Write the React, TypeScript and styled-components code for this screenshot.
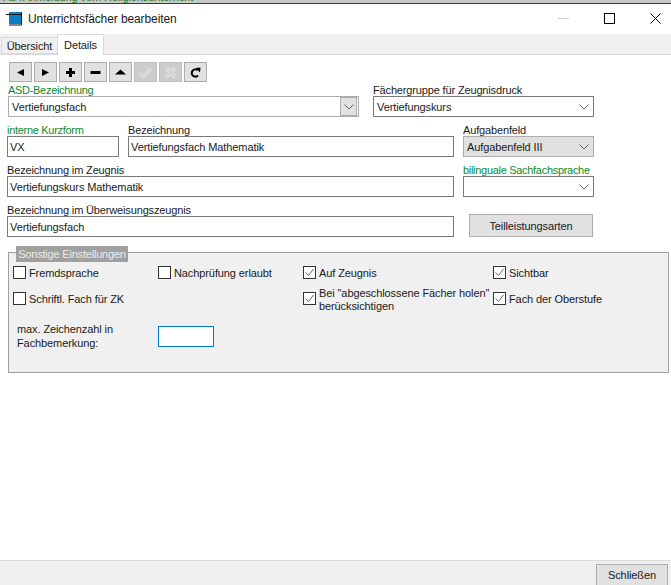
import React from "react";
import styled, {createGlobalStyle} from "styled-components";

const GlobalStyle = createGlobalStyle`
    html, body {
        margin: 0;
        padding: 0;
        background: #fff;
    }

    body {
        font-family: "Liberation Sans", Arial, sans-serif;
        font-size: 11px;
        letter-spacing: -0.1px;
        color: #1a1a1a;
    }
`;

const Page = styled.div`
    width: 671px;
    height: 585px;
    display: flex;
    flex-direction: column;
    overflow: hidden;
    background: #fff;
`;

const BehindWindow = styled.div`
    height: 3px;
    flex: 0 0 auto;
    display: flex;
    align-items: flex-end;
    padding-left: 3px;
    overflow: hidden;
    background: #c8c8c8;
    border-bottom: 1px solid #3c3c3c;
    color: #1f7a1f;
    font-size: 11px;
    line-height: 12px;
    white-space: nowrap;
`;

const TitleBar = styled.div`
    height: 30px;
    flex: 0 0 auto;
    display: flex;
    align-items: center;
    padding-left: 6px;
    margin-right: -7px;
    font-size: 12px;
`;

const TitleText = styled.span`
    margin-left: 6px;
    flex: 1;
`;

const WindowButton = styled.div`
    width: 46px;
    height: 30px;
    padding-bottom: 2px;
    box-sizing: border-box;
    display: flex;
    align-items: center;
    justify-content: center;
`;

const TabStrip = styled.div`
    height: 20px;
    flex: 0 0 auto;
    display: flex;
    align-items: flex-end;
    padding-left: 1px;
    background: #f0f0f0;
    border-bottom: 1px solid #d9d9d9;
`;

const Tab = styled.div<{ $active?: boolean }>`
    height: ${p => (p.$active ? 21 : 17)}px;
    margin-bottom: ${p => (p.$active ? -1 : 0)}px;
    width: ${p => (p.$active ? 47 : 56)}px;
    display: flex;
    align-items: center;
    justify-content: center;
    box-sizing: border-box;
    background: ${p => (p.$active ? "#fff" : "#f0f0f0")};
    border: 1px solid #d9d9d9;
    border-bottom: ${p => (p.$active ? "none" : "1px solid #d9d9d9")};
    border-right: ${p => (p.$active ? "1px solid #d9d9d9" : "none")};
`;

const Content = styled.div`
    flex: 1;
    display: flex;
    flex-direction: column;
    padding: 7px 2px 0 7px;
`;

const Toolbar = styled.div`
    display: flex;
    gap: 2px;
    padding-left: 2px;
    height: 20px;
`;

const ToolButton = styled.div<{ $disabled?: boolean }>`
    width: 23px;
    height: 20px;
    box-sizing: border-box;
    display: flex;
    align-items: center;
    justify-content: center;
    background: ${p => (p.$disabled ? "#cccccc" : "#e1e1e1")};
    border: 1px solid ${p => (p.$disabled ? "#bfbfbf" : "#adadad")};
`;

const FormRow = styled.div<{ $gap: number; $inset?: number }>`
    display: flex;
    gap: ${p => p.$gap}px;
    padding-left: ${p => p.$inset ?? 0}px;
    height: 35px;
    margin-bottom: 5px;
`;

const Field = styled.div<{ $width: number }>`
    width: ${p => p.$width}px;
    flex: 0 0 auto;
    display: flex;
    flex-direction: column;
`;

const Label = styled.label<{ $required?: boolean }>`
    height: 14px;
    line-height: 17px;
    white-space: nowrap;
    letter-spacing: ${p => (p.$required ? -0.3 : -0.15)}px;
    color: ${p => (p.$required ? "#0c8a2c" : "#1a1a1a")};
`;

const TextInput = styled.input`
    height: 21px;
    width: 100%;
    box-sizing: border-box;
    margin: 0;
    padding: 0 2px;
    font: inherit;
    letter-spacing: inherit;
    color: #1a1a1a;
    background: #fff;
    border: 1px solid #7a7a7a;
    outline: none;
`;

const ComboBox = styled.div<{ $disabled?: boolean; $quiet?: boolean }>`
    height: 21px;
    box-sizing: border-box;
    display: flex;
    align-items: center;
    padding-left: 3px;
    background: ${p => (p.$disabled ? "#e1e1e1" : "#fff")};
    border: 1px solid ${p => (p.$disabled || p.$quiet ? "#adadad" : "#7a7a7a")};
`;

const ComboText = styled.span`
    flex: 1;
`;

const ComboArrow = styled.div<{ $boxed?: boolean }>`
    width: 17px;
    height: 100%;
    box-sizing: border-box;
    display: flex;
    align-items: center;
    justify-content: center;
    margin-right: 1px;
    background: ${p => (p.$boxed ? "#e1e1e1" : "transparent")};
    border: ${p => (p.$boxed ? "1px solid #adadad" : "none")};
`;

const PushButton = styled.div`
    width: 124px;
    height: 23px;
    margin: -2px 0 0 15px;
    align-self: flex-end;
    box-sizing: border-box;
    display: flex;
    align-items: center;
    justify-content: center;
    background: #e1e1e1;
    border: 1px solid #adadad;
`;

const Group = styled.fieldset`
    position: relative;
    margin: 10px 0 0 1px;
    padding: 13px 0 0 4px;
    height: 121px;
    box-sizing: border-box;
    background: #f0f0f0;
    border: 1px solid #a0a0a0;
    min-width: 0;
`;

const GroupTitle = styled.div`
    position: absolute;
    left: 7px;
    top: -7px;
    width: 112px;
    height: 16px;
    line-height: 16px;
    text-align: center;
    white-space: nowrap;
    letter-spacing: -0.2px;
    background: #a0a0a0;
    color: #ececec;
`;

const OptionGrid = styled.div`
    display: grid;
    grid-template-columns: 145px 145px 190px 1fr;
    grid-template-rows: 26px 30px;
`;

const Option = styled.div`
    display: flex;
    align-items: flex-start;
    gap: 3px;
`;

const OptionText = styled.span<{ $twoLines?: boolean }>`
    line-height: 13px;
    white-space: nowrap;
    margin-top: ${p => (p.$twoLines ? -5 : 1)}px;
`;

const Box = styled.div`
    width: 13px;
    height: 13px;
    flex: 0 0 auto;
    box-sizing: border-box;
    display: flex;
    align-items: center;
    justify-content: center;
    background: #fff;
    border: 1px solid #333;
`;

const LimitRow = styled.div`
    display: grid;
    grid-template-columns: 145px 56px;
    align-items: center;
    padding-left: 4px;
`;

const LimitText = styled.span`
    line-height: 14px;
`;

const LimitInput = styled.input`
    height: 21px;
    width: 56px;
    margin: 0 0 0 -4px;
    padding: 0;
    box-sizing: border-box;
    background: #fff;
    border: 1px solid #0078d7;
    outline: none;
`;

const Footer = styled.div`
    height: 25px;
    flex: 0 0 auto;
    display: flex;
    justify-content: flex-end;
    align-items: flex-start;
    padding: 3px 3px 0 0;
    box-sizing: border-box;
    background: #f0f0f0;
    border-top: 1px solid #dcdcdc;
`;

const CloseButton = styled.div`
    width: 72px;
    height: 26px;
    flex: 0 0 auto;
    box-sizing: border-box;
    padding-top: 4px;
    text-align: center;
    background: #e1e1e1;
    border: 1px solid #adadad;
`;

const Chevron = () => (
    <svg width="10" height="6" viewBox="0 0 10 6">
        <path d="M0.5 0.5 L5 5 L9.5 0.5" fill="none" stroke="#666" strokeWidth="1"/>
    </svg>
);

const Check = () => (
    <svg width="11" height="11" viewBox="0 0 11 11">
        <path d="M1.5 5.5 L4.5 8.5 L9.5 2" fill="none" stroke="#666" strokeWidth="1"/>
    </svg>
);

const AppIcon = () => (
    <svg width="16" height="14" viewBox="0 0 16 14">
        <rect x="3" y="0" width="12" height="12" fill="#0a7fc4"/>
        <path d="M15.5 0 V13 H3" fill="none" stroke="#111" strokeWidth="1"/>
        <path d="M0 2.5 H15" stroke="#111" strokeWidth="1"/>
    </svg>
);

const Glyph = ({d}: { d: string }) => (
    <svg width="13" height="13" viewBox="0 0 13 13"><path d={d} fill="#000"/></svg>
);

const tools = [
    {key: "prev", d: "M3 6.5 L10 3 V10 Z"},
    {key: "next", d: "M10 6.5 L3 3 V10 Z"},
    {key: "add", d: "M5 2 H8 V5 H11 V8 H8 V11 H5 V8 H2 V5 H5 Z"},
    {key: "remove", d: "M1.5 5 H11.5 V8 H1.5 Z"},
    {key: "up", d: "M6.5 3.5 L12 8.5 H1 Z"},
];

const checkOptions = [
    {key: "fremd", text: "Fremdsprache"},
    {key: "nach", text: "Nachprüfung erlaubt"},
    {key: "zeugnis", text: "Auf Zeugnis", checked: true},
    {key: "sicht", text: "Sichtbar", checked: true},
    {key: "schrift", text: "Schriftl. Fach für ZK"},
    {key: "leer"},
    {key: "abg", text: <>Bei "abgeschlossene Fächer holen"<br/>berücksichtigen</>, checked: true, twoLines: true},
    {key: "ober", text: "Fach der Oberstufe", checked: true},
];

export default function App() {
    return <Page>
        <GlobalStyle/>
        <BehindWindow>Ab-/Anmeldung vom Religionsunterricht</BehindWindow>
        <TitleBar>
            <AppIcon/>
            <TitleText>Unterrichtsfächer bearbeiten</TitleText>
            <WindowButton>
                <svg width="11" height="11" viewBox="0 0 11 11"><path d="M0 5.5 H11" stroke="#ccc"/></svg>
            </WindowButton>
            <WindowButton>
                <svg width="11" height="11" viewBox="0 0 11 11"><rect x=".5" y=".5" width="10" height="10" fill="none" stroke="#000"/></svg>
            </WindowButton>
            <WindowButton>
                <svg width="11" height="11" viewBox="0 0 11 11"><path d="M.5 .5 L10.5 10.5 M10.5 .5 L.5 10.5" stroke="#000"/></svg>
            </WindowButton>
        </TitleBar>
        <TabStrip>
            <Tab>Übersicht</Tab>
            <Tab $active>Details</Tab>
        </TabStrip>
        <Content>
            <Toolbar>
                {tools.map(tool => <ToolButton key={tool.key}><Glyph d={tool.d}/></ToolButton>)}
                <ToolButton $disabled>
                    <svg width="15" height="13" viewBox="0 0 15 13">
                        <path d="M2 7 L5.5 10.5 L13 2.5" fill="none" stroke="#ececec" strokeWidth="3"/>
                        <path d="M2 7 L5.5 10.5 L13 2.5" fill="none" stroke="#cccccc" strokeWidth="1.4"/>
                    </svg>
                </ToolButton>
                <ToolButton $disabled>
                    <svg width="13" height="13" viewBox="0 0 13 13">
                        <path d="M2 2 L11 11 M11 2 L2 11" fill="none" stroke="#ececec" strokeWidth="3.4"/>
                        <path d="M2 2 L11 11 M11 2 L2 11" fill="none" stroke="#cccccc" strokeWidth="1.6"/>
                    </svg>
                </ToolButton>
                <ToolButton>
                    <svg width="13" height="13" viewBox="0 0 13 13">
                        <path d="M8.5 4.2 A3.6 3.6 0 1 0 9 9.5" fill="none" stroke="#000" strokeWidth="2"/>
                        <path d="M6.5 2 L11.5 1.5 L11 6.5 Z" fill="#000"/>
                    </svg>
                </ToolButton>
            </Toolbar>
            <FormRow $gap={14} $inset={1}>
                <Field $width={351}>
                    <Label $required>ASD-Bezeichnung</Label>
                    <ComboBox $quiet>
                        <ComboText>Vertiefungsfach</ComboText>
                        <ComboArrow $boxed><Chevron/></ComboArrow>
                    </ComboBox>
                </Field>
                <Field $width={221}>
                    <Label>Fächergruppe für Zeugnisdruck</Label>
                    <ComboBox>
                        <ComboText>Vertiefungskurs</ComboText>
                        <ComboArrow><Chevron/></ComboArrow>
                    </ComboBox>
                </Field>
            </FormRow>
            <FormRow $gap={9}>
                <Field $width={112}>
                    <Label $required>interne Kurzform</Label>
                    <TextInput readOnly value="VX"/>
                </Field>
                <Field $width={326}>
                    <Label>Bezeichnung</Label>
                    <TextInput readOnly value="Vertiefungsfach Mathematik"/>
                </Field>
                <Field $width={131}>
                    <Label>Aufgabenfeld</Label>
                    <ComboBox $disabled>
                        <ComboText>Aufgabenfeld III</ComboText>
                        <ComboArrow><Chevron/></ComboArrow>
                    </ComboBox>
                </Field>
            </FormRow>
            <FormRow $gap={9}>
                <Field $width={447}>
                    <Label>Bezeichnung im Zeugnis</Label>
                    <TextInput readOnly value="Vertiefungskurs Mathematik"/>
                </Field>
                <Field $width={131}>
                    <Label $required>bilinguale Sachfachsprache</Label>
                    <ComboBox>
                        <ComboText/>
                        <ComboArrow><Chevron/></ComboArrow>
                    </ComboBox>
                </Field>
            </FormRow>
            <FormRow $gap={0}>
                <Field $width={447}>
                    <Label>Bezeichnung im Überweisungszeugnis</Label>
                    <TextInput readOnly value="Vertiefungsfach"/>
                </Field>
                <PushButton>Teilleistungsarten</PushButton>
            </FormRow>
            <Group>
                <GroupTitle>Sonstige Einstellungen</GroupTitle>
                <OptionGrid>
                    {checkOptions.map(option => option.text
                        ? <Option key={option.key}>
                            <Box>{option.checked && <Check/>}</Box>
                            <OptionText $twoLines={option.twoLines}>{option.text}</OptionText>
                        </Option>
                        : <div key={option.key}/>)}
                </OptionGrid>
                <LimitRow>
                    <LimitText>max. Zeichenzahl in<br/>Fachbemerkung:</LimitText>
                    <LimitInput readOnly/>
                </LimitRow>
            </Group>
        </Content>
        <Footer>
            <CloseButton>Schließen</CloseButton>
        </Footer>
    </Page>;
}
